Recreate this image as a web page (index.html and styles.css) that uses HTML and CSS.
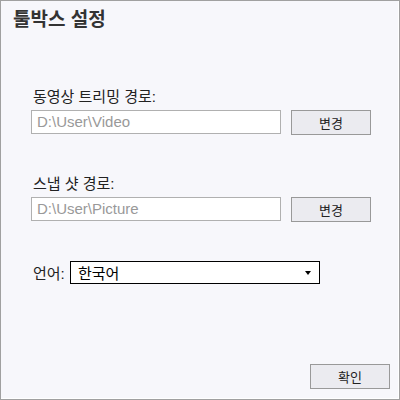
FILE: index.html
```html
<!DOCTYPE html>
<html lang="ko">
<head>
    <meta charset="UTF-8">
    <meta name="viewport" content="width=device-width, initial-scale=1.0">
    <title>툴박스 설정</title>
    <link rel="stylesheet" href="styles.css">
</head>
<body>
    <div class="window">
        <!-- 제목 -->
        <div class="title">툴박스 설정</div>

        <div class="content">
            <!-- 동영상 트리밍 경로 -->
            <div class="field">
                <label class="field-label">동영상 트리밍 경로:</label>
                <div class="path-row">
                    <div class="path-input">D:\User\Video</div>
                    <button class="btn">변경</button>
                </div>
            </div>

            <!-- 스냅 샷 경로 -->
            <div class="field">
                <label class="field-label">스냅 샷 경로:</label>
                <div class="path-row">
                    <div class="path-input">D:\User\Picture</div>
                    <button class="btn">변경</button>
                </div>
            </div>

            <!-- 언어 -->
            <div class="lang-row">
                <span class="lang-label">언어:</span>
                <div class="select">
                    <span>한국어</span>
                    <span class="arrow"></span>
                </div>
            </div>
        </div>

        <div class="footer">
            <button class="btn">확인</button>
        </div>
    </div>
</body>
</html>
```

FILE: styles.css
```css
/* 기본 */
body {
    margin: 0;
    padding: 0;
    font-family: "Liberation Sans", "Noto Sans CJK KR", sans-serif;
    font-size: 15px;
    color: #222;
}

.window {
    width: 400px;
    height: 400px;
    box-sizing: border-box;
    border: 1px solid #a0a0a0;
    box-shadow: inset -1px -1px 0 #fff;
    background-color: #f7f7fb;
    display: flex;
    flex-direction: column;
}

.title {
    padding: 8px 0 0 12px;
    height: 22px;
    line-height: 22px;
    font-size: 19px;
    font-weight: bold;
    color: #333;
}

.content {
    padding: 56px 0 0 30px;
    flex: 1;
}

.field {
    margin-bottom: 39px;
}

.field-label {
    display: block;
    margin-left: 2px;
    height: 20px;
    line-height: 20px;
    margin-bottom: 3px;
}

.path-row {
    display: flex;
    align-items: flex-start;
}

.path-input {
    width: 250px;
    height: 24px;
    box-sizing: border-box;
    border: 1px solid #b0b0b0;
    background: #fff;
    color: #999;
    padding-left: 5px;
    line-height: 22px;
    font-size: 15px;
}

.btn {
    width: 80px;
    height: 25px;
    margin-left: 10px;
    box-sizing: border-box;
    border: 1px solid #999;
    background-color: #ebebf0;
    color: #222;
    font-family: "Liberation Sans", "Noto Sans CJK KR", sans-serif;
    font-size: 13px;
    padding: 0;
}

.lang-row {
    display: flex;
    align-items: center;
    margin-top: 2px;
}

.lang-label {
    margin-left: 2px;
    width: 37px;
}

.select {
    width: 250px;
    height: 23px;
    box-sizing: border-box;
    border: 1px solid #000;
    background: #fff;
    display: flex;
    align-items: center;
    justify-content: space-between;
    padding: 0 8px 0 7px;
    color: #000;
    font-size: 15px;
}

.arrow {
    width: 0;
    height: 0;
    border-left: 3px solid transparent;
    border-right: 3px solid transparent;
    border-top: 4px solid #000;
}

.footer {
    display: flex;
    justify-content: flex-end;
    padding: 0 9px 10px 0;
}
```
